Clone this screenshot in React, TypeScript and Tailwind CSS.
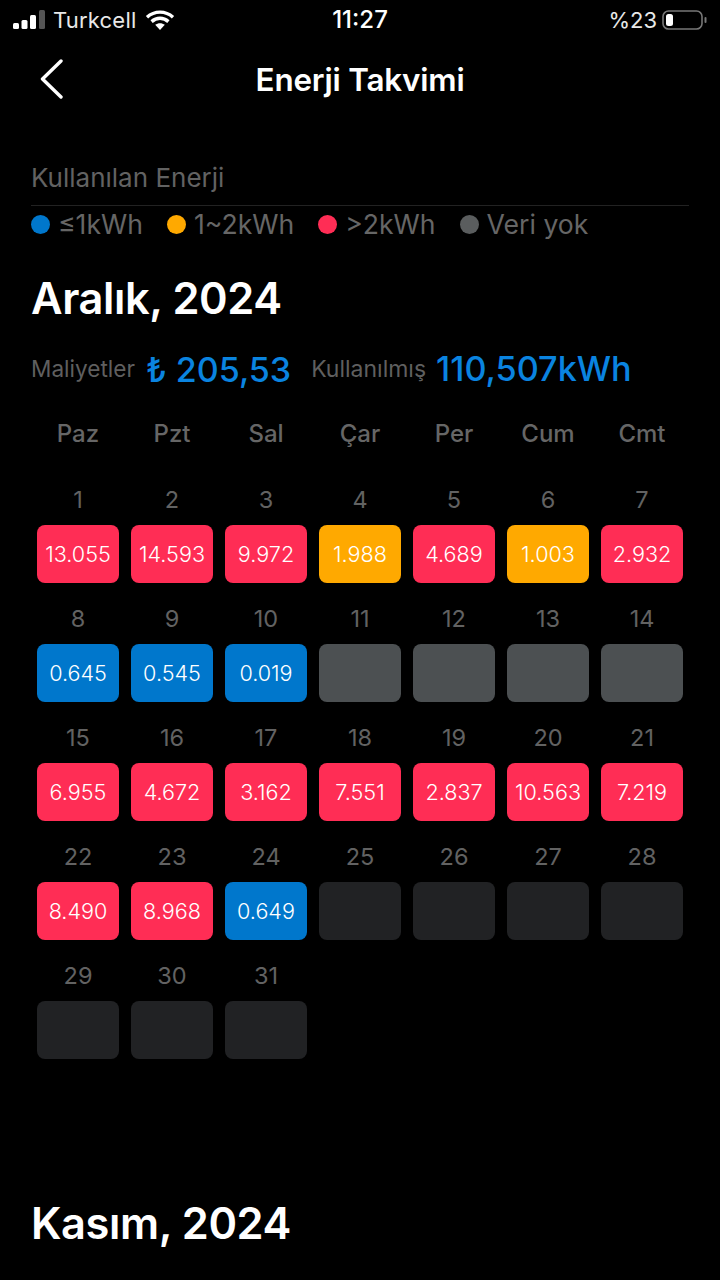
const R = "bg-[#ff2d55]", O = "bg-[#ffa900]", B = "bg-[#0077cc]", G = "bg-[#4c5052]", D = "bg-[#212224]";
type C = [string, string?];
const days: C[] = [
  [R,"13.055"],[R,"14.593"],[R,"9.972"],[O,"1.988"],[R,"4.689"],[O,"1.003"],[R,"2.932"],
  [B,"0.645"],[B,"0.545"],[B,"0.019"],[G],[G],[G],[G],
  [R,"6.955"],[R,"4.672"],[R,"3.162"],[R,"7.551"],[R,"2.837"],[R,"10.563"],[R,"7.219"],
  [R,"8.490"],[R,"8.968"],[B,"0.649"],[D],[D],[D],[D],
  [D],[D],[D],
];
const week = ["Paz","Pzt","Sal","Çar","Per","Cum","Cmt"];
const legend: [string,string][] = [["bg-[#0077cc]","≤1kWh"],["bg-[#ffa900]","1~2kWh"],["bg-[#ff2d55]",">2kWh"],["bg-[#5a5d5e]","Veri yok"]];

function StatusBar() {
  return (
    <div className="relative flex h-10 items-center justify-between pl-[13px] pr-[12px] text-[22px] text-[#e8e8e8]">
      <div className="flex items-center">
        <svg width="32" height="20" viewBox="0 0 32 20" fill="#fff">
          <rect x="0" y="13" width="6" height="6" rx="1.5"/>
          <rect x="8.5" y="10" width="6" height="9" rx="1.5"/>
          <rect x="17" y="5" width="6" height="14" rx="1.5"/>
          <rect x="26" y="0" width="6" height="19" rx="1.5" fill="#555"/>
        </svg>
        <span className="ml-[8px] text-[22px] leading-none tracking-[0.2px]">Turkcell</span>
        <svg className="ml-[9px]" width="30" height="22" viewBox="0 0 30 22" fill="none" stroke="#fff" strokeWidth="3.4">
          <path d="M2 8.2C9.5 1.4 20.5 1.4 28 8.2"/>
          <path d="M6.6 12.6C11.6 8.2 18.4 8.2 23.4 12.6"/>
          <path d="M15 21l4.8-5.2c-2.8-2.2-6.8-2.2-9.6 0z" fill="#fff" stroke="none"/>
        </svg>
      </div>
      <span className="absolute left-0 right-0 text-center text-[24px] font-medium leading-none text-white">11:27</span>
      <div className="flex items-center">
        <span className="leading-none">%23</span>
        <svg className="ml-[5px]" width="46" height="22" viewBox="0 0 46 22">
          <rect x="1" y="2" width="39" height="18" rx="5.5" fill="none" stroke="#777" strokeWidth="1.6"/>
          <rect x="4" y="5" width="7" height="12" rx="2.5" fill="#fff"/>
          <rect x="42.5" y="8" width="2" height="6" rx="1" fill="#777"/>
        </svg>
      </div>
    </div>
  );
}

function Month({ title }: { title: string }) {
  return <h2 className="text-[43.4px] font-semibold leading-[48px] tracking-[-0.4px] text-white">{title}</h2>;
}

export default function App() {
  return (
    <div className="h-[1280px] w-[720px] overflow-hidden bg-black font-['Inter','Noto_Sans',sans-serif]">
      <StatusBar />
      <div className="relative flex h-[80px] items-center justify-center">
        <svg className="absolute left-[40px] top-[19px]" width="24" height="40" viewBox="0 0 24 40" fill="none" stroke="#fff" strokeWidth="3.4" strokeLinecap="round" strokeLinejoin="round">
          <path d="M21 2 2.5 20 21 38"/>
        </svg>
        <h1 className="pt-[2px] text-[31.4px] font-semibold leading-none tracking-[-0.2px] text-white">Enerji Takvimi</h1>
      </div>
      <div className="px-[31px] pt-[40px]">
        <div className="border-b border-[#222] pb-[9px] text-[26px] leading-[36px] text-[#626262]">Kullanılan Enerji</div>
        <div className="flex h-[36px] items-center gap-[24px]">
          {legend.map(([c, t]) => (
            <div key={t} className="flex items-center gap-[8px]">
              <span className={`h-[19px] w-[19px] rounded-full ${c}`} />
              <span className="text-[26.6px] leading-none text-[#666]">{t}</span>
            </div>
          ))}
        </div>
        <div className="mt-[32px]"><Month title="Aralık, 2024" /></div>
        <div className="mt-[24px] flex h-[46px] items-center">
          <span className="text-[22.6px] text-[#5f5f5f]">Maliyetler</span>
          <span className="ml-[11px] text-[34px] font-medium text-[#0a84e0]">₺ 205,53</span>
          <span className="ml-[20px] text-[23px] text-[#5f5f5f]">Kullanılmış</span>
          <span className="ml-[10px] text-[34.2px] font-medium text-[#0a84e0]">110,507kWh</span>
        </div>
        <div className="mt-[24px] grid grid-cols-7">
          {week.map((w) => (
            <div key={w} className="h-[36px] text-center text-[24px] font-medium leading-[36px] text-[#666]">{w}</div>
          ))}
        </div>
        <div className="mt-[36px] grid grid-cols-7 gap-y-[24px]">
          {days.map(([bg, v], i) => (
            <div key={i} className="flex flex-col items-center">
              <div className="h-[37px] text-[23.5px] leading-[24px] text-[#626262]">{i + 1}</div>
              <div className={`flex h-[58px] w-[82px] items-center justify-center rounded-[8px] text-[21.6px] font-light text-white ${bg}`}>{v}</div>
            </div>
          ))}
        </div>
        <div className="mt-[140px]"><Month title="Kasım, 2024" /></div>
      </div>
    </div>
  );
}
